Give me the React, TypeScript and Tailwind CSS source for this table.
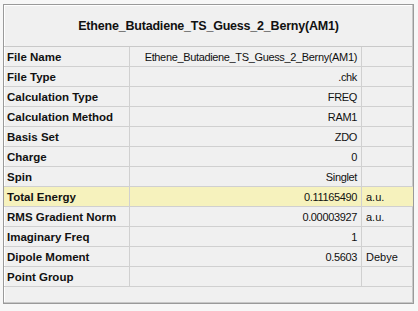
import React from 'react';

type Row = { label: string; value: string; unit?: string; highlight?: boolean };

const rows: Row[] = [
  { label: 'File Name', value: 'Ethene_Butadiene_TS_Guess_2_Berny(AM1)' },
  { label: 'File Type', value: '.chk' },
  { label: 'Calculation Type', value: 'FREQ' },
  { label: 'Calculation Method', value: 'RAM1' },
  { label: 'Basis Set', value: 'ZDO' },
  { label: 'Charge', value: '0' },
  { label: 'Spin', value: 'Singlet' },
  { label: 'Total Energy', value: '0.11165490', unit: 'a.u.', highlight: true },
  { label: 'RMS Gradient Norm', value: '0.00003927', unit: 'a.u.' },
  { label: 'Imaginary Freq', value: '1' },
  { label: 'Dipole Moment', value: '0.5603', unit: 'Debye' },
  { label: 'Point Group', value: '' },
];

export default function App() {
  return (
    <div
      className="w-[418px] h-[311px] bg-[#f7f7f7] pt-[4px] pl-[3px] text-[#111]"
      style={{ fontFamily: '"Liberation Sans", Arial, sans-serif' }}
    >
      <div className="w-[411px] h-[300px] border border-[#9a9a9a] bg-[#f0f0f0] shadow-[inset_-1px_-1px_0_#c8c8c8,inset_1px_1px_0_#ffffff]">
        <div className="h-[42px] pt-[2px] flex items-center justify-center font-bold text-[12.5px] tracking-[-0.2px] border-b border-[#c9c9c9]">
          Ethene_Butadiene_TS_Guess_2_Berny(AM1)
        </div>
        {rows.map((r) => (
          <div
            key={r.label}
            className={`grid grid-cols-[126px_232px_1fr] h-[20px] border-b border-[#d0d0d0] ${
              r.highlight ? 'bg-[#f6f2bd]' : ''
            }`}
          >
            <div className="pl-[3px] pt-[2px] font-bold text-[11.5px] leading-[17px] border-r border-[#d0d0d0] whitespace-nowrap">
              {r.label}
            </div>
            <div className="pr-[4px] pt-[2px] text-right text-[11px] tracking-[-0.35px] leading-[17px] border-r border-[#d0d0d0] whitespace-nowrap">
              {r.value}
            </div>
            <div className="pl-[4px] pt-[2px] text-[11px] leading-[17px] whitespace-nowrap">{r.unit ?? ''}</div>
          </div>
        ))}
      </div>
    </div>
  );
}
